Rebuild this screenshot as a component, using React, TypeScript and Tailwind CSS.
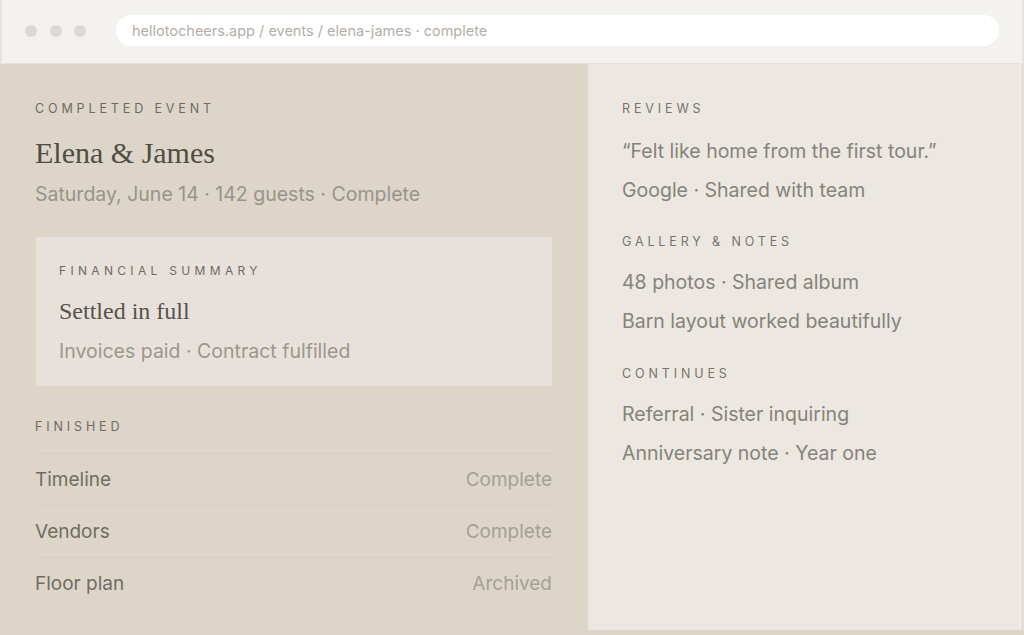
const finished = [
  { label: "Timeline", value: "Complete" },
  { label: "Vendors", value: "Complete" },
  { label: "Floor plan", value: "Archived" },
];

const sections = [
  { title: "Reviews", lines: ["\u201CFelt like home from the first tour.\u201D", "Google · Shared with team"], gap: "", inner: "mt-[14.5px]" },
  { title: "Gallery & Notes", lines: ["48 photos · Shared album", "Barn layout worked beautifully"], gap: "mt-[24px]", inner: "mt-[13px]" },
  { title: "Continues", lines: ["Referral · Sister inquiring", "Anniversary note · Year one"], gap: "mt-[25px]", inner: "mt-[13px]" },
];

const sans = "font-['Inter','Liberation_Sans',sans-serif]";
const serif = "font-['Liberation_Serif','DejaVu_Serif',serif]";

function Eyebrow({ children, className = "" }: { children: React.ReactNode; className?: string }) {
  return (
    <div className={`h-4 text-[12.5px] uppercase leading-4 tracking-[0.31em] text-[#6d6b61] ${className}`}>
      {children}
    </div>
  );
}

export default function App() {
  return (
    <div className={`h-[635px] w-[1024px] overflow-hidden bg-[#ded5c9] ${sans}`}>
      {/* browser chrome */}
      <div className="flex h-[64px] items-center border-x-2 border-b border-[#e7e2dc] bg-[#f4f2ef] pb-[2px] pl-[23px] pr-[23px]">
        <div className="flex gap-[12.5px]">
          <span className="h-[12px] w-[12px] rounded-full bg-[#dcd9d5]" />
          <span className="h-[12px] w-[12px] rounded-full bg-[#dcd9d5]" />
          <span className="h-[12px] w-[12px] rounded-full bg-[#dcd9d5]" />
        </div>
        <div className="ml-[30px] flex h-[31px] flex-1 items-center rounded-full bg-white pl-4 text-[14.5px] text-[#b4aea7]">
          hellotocheers.app / events / elena-james · complete
        </div>
      </div>

      <div className="flex">
        {/* left column */}
        <div className="w-[588px] pl-[35px] pr-[36px] pt-[37px]">
          <Eyebrow>Completed event</Eyebrow>
          <h1 className={`mt-[16px] h-[40px] text-[30px] leading-[40px] text-[#4f4e45] ${serif}`}>Elena &amp; James</h1>
          <p className="mt-[7px] h-[28px] text-[19.5px] leading-[28px] text-[#97948a]">
            Saturday, June 14 · 142 guests · Complete
          </p>

          <div className="ml-px mt-[29px] bg-[#e8e1db] pb-[22px] pl-[23px] pt-[26px]">
            <Eyebrow className="text-[12px] tracking-[0.36em]">Financial summary</Eyebrow>
            <div className={`mt-[16px] h-[32px] text-[24px] leading-[32px] text-[#55534a] ${serif}`}>Settled in full</div>
            <div className="mt-[11px] h-[26px] text-[19.5px] leading-[26px] text-[#9a978d]">
              Invoices paid · Contract fulfilled
            </div>
          </div>

          <Eyebrow className="mt-[33px]">Finished</Eyebrow>
          <div className="mt-[18px]">
            {finished.map((row) => (
              <div
                key={row.label}
                className="flex h-[52px] items-center justify-between border-t border-[#d7cec2] pt-[2px] text-[19px]"
              >
                <span className="text-[#6f6d63]">{row.label}</span>
                <span className="text-[#a4a096]">{row.value}</span>
              </div>
            ))}
          </div>
        </div>

        {/* right column */}
        <div className="h-[566px] w-[432px] border-l border-[#e9e4de] bg-[#ece7e1] pl-[33px] pt-[37px]">
          {sections.map((s) => (
            <div key={s.title} className={s.gap}>
              <Eyebrow className="text-[#77756c]">{s.title}</Eyebrow>
              <div className={s.inner}>
                {s.lines.map((line) => (
                  <div key={line} className="h-[39px] text-[19.5px] leading-[39px] text-[#85837a]">
                    {line}
                  </div>
                ))}
              </div>
            </div>
          ))}
        </div>
        <div className="h-[566px] w-[4px] border-l border-[#f3f0ec] bg-[#e4ddd4]" />
      </div>
    </div>
  );
}
